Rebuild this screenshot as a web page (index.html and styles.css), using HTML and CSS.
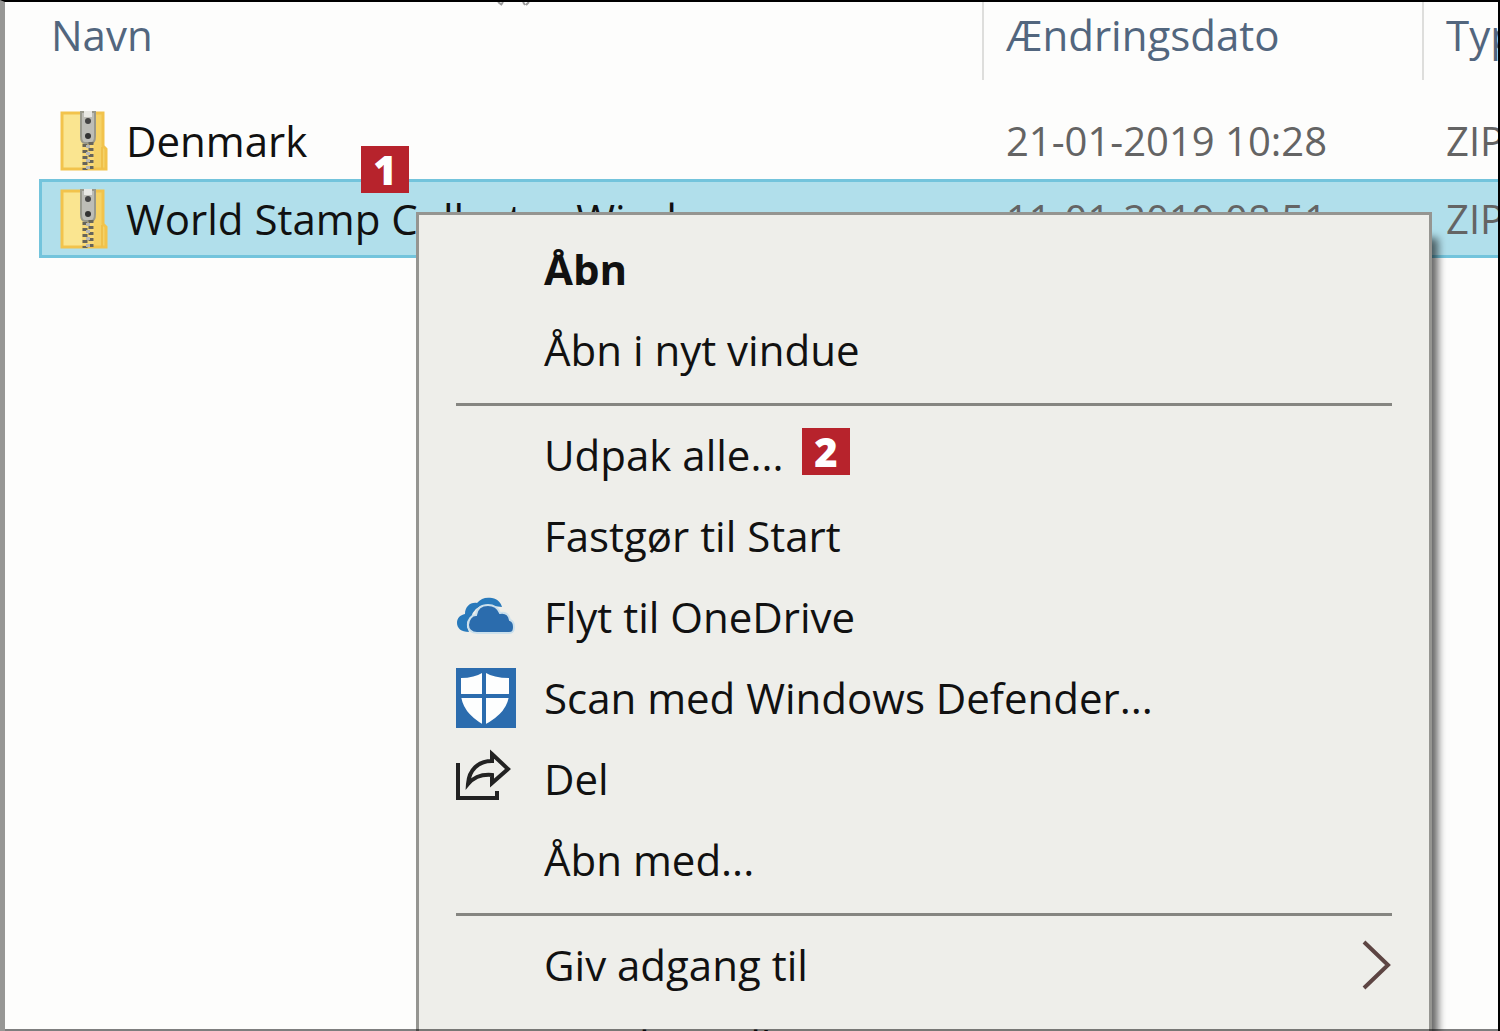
FILE: index.html
```html
<!DOCTYPE html>
<html lang="da">
<head>
<meta charset="utf-8">
<title>Stifinder</title>
<link rel="stylesheet" href="styles.css">
</head>
<body>
<svg class="defs" aria-hidden="true">
  <symbol id="zip" viewBox="0 0 48 60">
    <path d="M1 1H44V35L47 38V59H1Z" fill="#f8d978"/>
    <path d="M2 2H22V58H2Z" fill="#fae590"/>
    <path d="M34 2H43V36L46 39V58H34Z" fill="#f5d267"/>
    <path d="M2 2H43V35L46 38V58H2Z" fill="none" stroke="#f2c34c" stroke-width="3"/>
    <path d="M42 36V58" stroke="#efc04a" stroke-width="2"/>
    <path d="M21 1H35V25Q35 32 31 32H25Q21 32 21 25Z" fill="#bdbdb7" stroke="#99998c" stroke-width="2"/>
    <path d="M24 0H32V6H24Z" fill="#e8e8e4"/>
    <circle cx="28" cy="10" r="3" fill="#444"/>
    <circle cx="28" cy="25" r="3" fill="#333"/>
    <path d="M25 33V59M31 31V59" stroke="#66645a" stroke-width="5" stroke-dasharray="3 3"/>
    <path d="M28 34V59" stroke="#b9b9b4" stroke-width="4" stroke-dasharray="3 4"/>
  </symbol>
</svg>
<div class="window">
  <table class="files">
    <colgroup><col class="c-name"><col class="c-date"><col class="c-type"></colgroup>
    <thead>
      <tr><th scope="col">Navn</th><th scope="col">Ændringsdato</th><th scope="col">Type</th></tr>
    </thead>
    <tbody>
      <tr>
        <td><span class="file"><svg class="zip"><use href="#zip"/></svg>Denmark</span></td>
        <td>21-01-2019 10:28</td><td>ZIP</td>
      </tr>
      <tr class="selected">
        <td><span class="file"><svg class="zip"><use href="#zip"/></svg>World Stamp Collector Windows</span></td>
        <td>11-01-2019 08:51</td><td>ZIP</td>
      </tr>
    </tbody>
  </table>
  <svg class="sort" viewBox="0 0 34 6" aria-hidden="true"><path d="M15 0L19 3M40 0L42 3M18 3L20 0M43 3L46 0" fill="none" stroke="#999" stroke-width="2"/></svg>

  <div class="menu">
    <button class="item default">Åbn</button>
    <button class="item">Åbn i nyt vindue</button>
    <hr>
    <button class="item">Udpak alle...</button>
    <button class="item">Fastgør til Start</button>
    <button class="item"><svg class="icon" viewBox="0 0 60 60">
      <path d="M13 45C5 45 1 41 1 36C1 31 4 28 9 27C9 20 14 15 21 16C25 11 30 10 36 11C42 12 45 16 46 20L29 18Q17 20 15 31Q10 34 11 40Z" fill="#2879bb"/>
      <path d="M21 46C15 46 12 42 12 38C12 32 16 28 20 28C21 21 26 18 32 18C38 18 42 21 44 26C50 25 53 28 54 33C57 34 58 37 58 40C58 44 57 46 53 46Z" fill="#2b6cad" stroke="#cbe0ec" stroke-width="2"/></svg>Flyt til OneDrive</button>
    <button class="item"><svg class="icon" viewBox="0 0 60 60">
      <path d="M0 0H60V60H0Z" fill="#2b6cae"/>
      <path d="M5 10Q18 10 28 4Q38 10 53 10V25Q53 44 28 57Q5 44 5 25Z" fill="#fdfefe"/>
      <path d="M28 2V58M3 28H55" stroke="#2b6cae" stroke-width="4"/></svg>Scan med Windows Defender...</button>
    <button class="item"><svg class="icon" viewBox="0 0 60 60" fill="none" stroke="#222" stroke-width="4">
      <path d="M2 14V49H41V42"/>
      <path d="M36 5L52 20L36 34V26C25 25 18 28 12 35C13 21 22 12 36 12Z"/></svg>Del</button>
    <button class="item">Åbn med...</button>
    <hr>
    <button class="item">Giv adgang til<svg class="chevron" viewBox="0 0 30 50" aria-hidden="true"><path d="M2 2L26 25L2 48" fill="none" stroke="#5d4543" stroke-width="4"/></svg></button>
    <button class="item">Gendan tidligere versioner</button>
  </div>
  <span class="badge one">1</span>
  <span class="badge two">2</span>
</div>
</body>
</html>
```
FILE: styles.css
```css
* { box-sizing: border-box; }
body {
  margin: 0;
  background: #fdfdfc;
  font-family: "Open Sans", "Noto Sans", sans-serif;
  font-size: 42px;
  line-height: 48px;
  color: #111;
}
.defs { position: absolute; width: 0; height: 0; }
.window {
  position: relative;
  height: 100vh;
  overflow: hidden;
  border: 2px solid #000;
  border-left: 5px solid #979795;
  border-bottom: 0;
}
.window::after {
  content: "";
  position: absolute;
  inset: auto 0 0;
  height: 2px;
  background: rgba(0, 0, 0, .5);
}
.files {
  width: calc(100% - 34px);
  margin-left: 34px;
  table-layout: fixed;
  border-collapse: separate;
  border-spacing: 0;
}
.c-name { width: 945px; }
.c-date { width: 440px; }
th, td { padding: 0 0 0 22px; text-align: left; white-space: nowrap; overflow: hidden; }
th {
  height: 78px;
  padding-bottom: 12px;
  font-weight: 400;
  color: #52667e;
  border-right: 2px solid #dededc;
}
th:first-child { padding-left: 12px; }
th:last-child { border-right: 0; }
tbody::before { content: ""; display: block; height: 22px; }
td { height: 77px; font-size: 40px; color: #646464; }
td:first-child { padding-left: 21px; font-size: 42px; color: #111; }
.selected td { height: 79px; background: #b1dfeb; border: solid #73c4dc; border-width: 3px 0; }
.selected td:first-child { border-left-width: 3px; padding-left: 18px; }
.file { display: flex; align-items: center; gap: 18px; }
.zip { width: 48px; height: 60px; flex: none; }
.sort { position: absolute; left: 470px; top: 0; width: 50px; height: 6px; overflow: visible; }
.menu {
  position: absolute;
  left: 411px;
  right: 66px;
  top: 210px;
  padding: 14px 37px;
  background: #eeeeea;
  border: 3px solid #959591;
  box-shadow: 10px 22px 8px -4px rgba(0, 0, 0, .6);
}
.item {
  display: flex;
  align-items: center;
  width: 100%;
  height: 81px;
  padding: 0 0 2px 88px;
  border: 0;
  background: none;
  font: inherit;
  color: #111;
  text-align: left;
  white-space: nowrap;
}
.item:has(.icon) { padding-left: 0; gap: 28px; }
.default { font-weight: 700; }
.icon { width: 60px; height: 60px; flex: none; }
.chevron { width: 30px; height: 50px; margin-left: auto; }
hr { height: 3px; margin: 12px 0 9px; border: 0; background: #858581; }
.badge {
  position: absolute;
  width: 48px;
  height: 47px;
  background: #b7232c;
  color: #fff;
  font-size: 40px;
  font-weight: 800;
  line-height: 47px;
  text-align: center;
}
.one { left: 356px; top: 144px; }
.two { left: 797px; top: 426px; }
```
